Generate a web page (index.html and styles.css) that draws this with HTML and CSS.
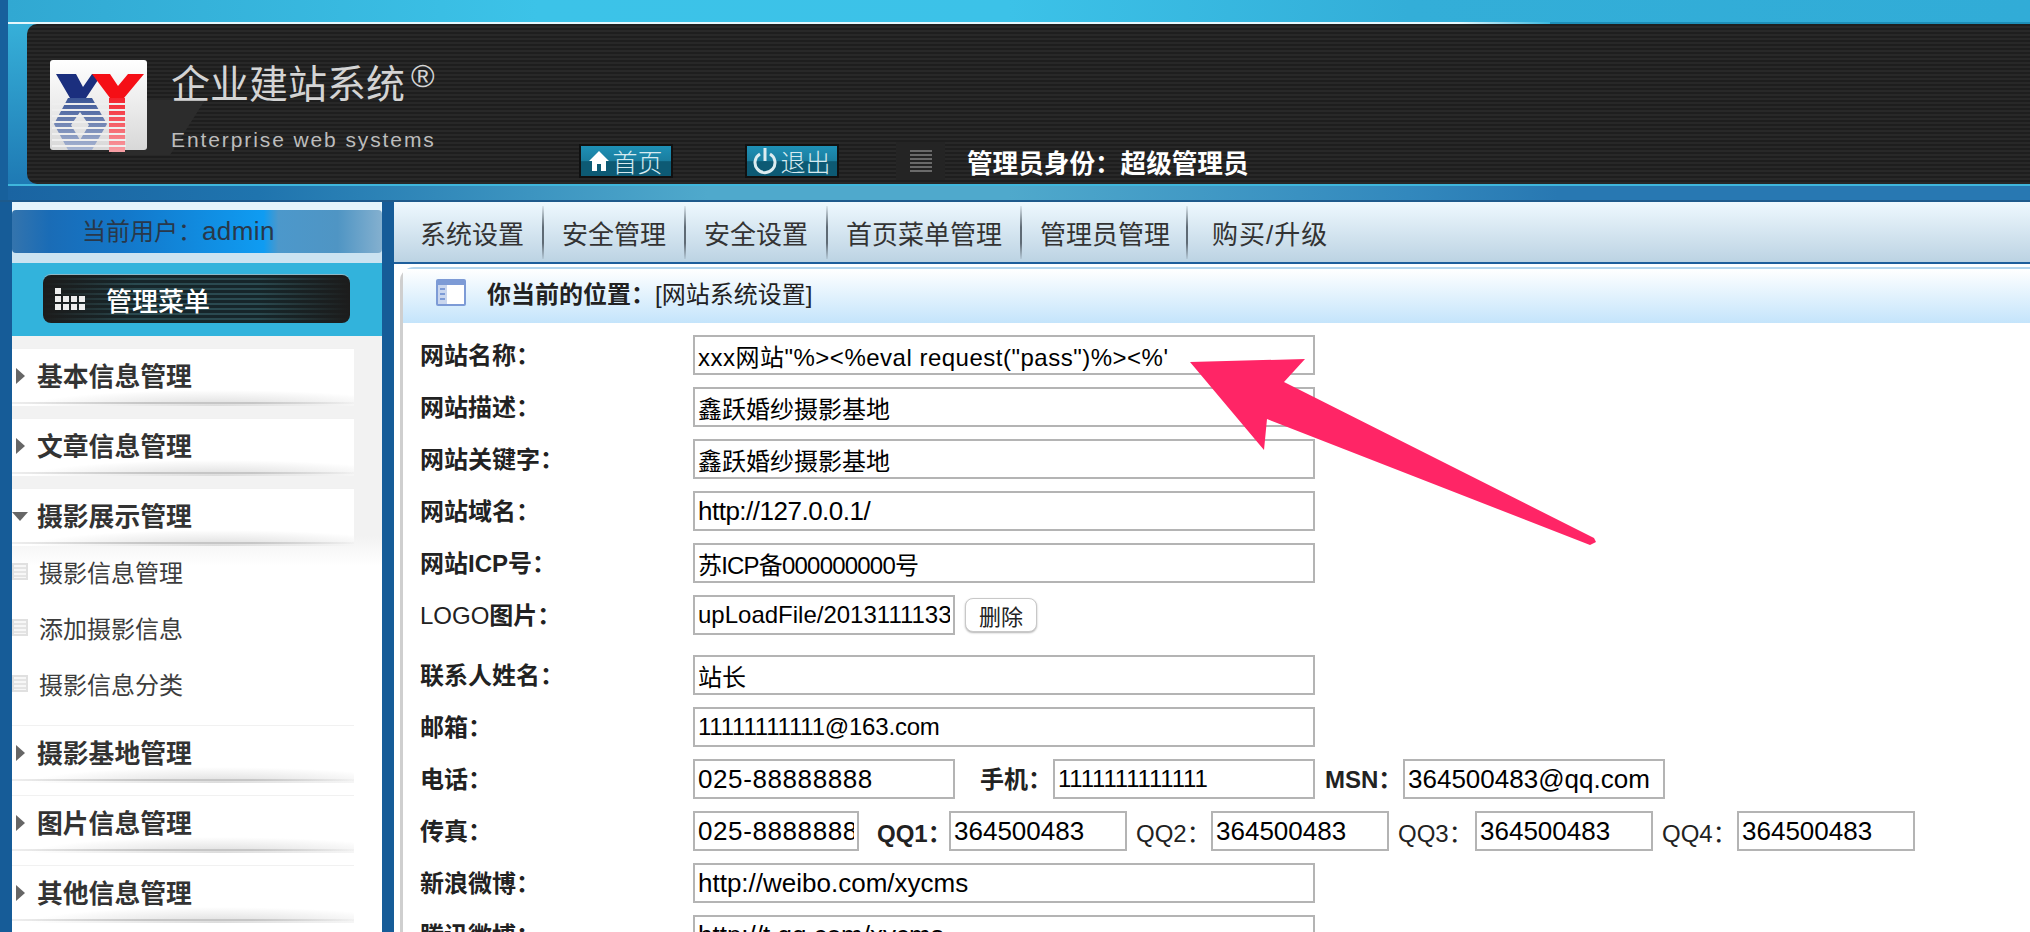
FILE: index.html
```html
<!DOCTYPE html>
<html lang="zh-CN">
<head>
    <meta charset="UTF-8" />
    <title>企业建站系统</title>
    <link rel="stylesheet" href="styles.css">
</head>
<body>
    <div class="top">
        <div class="top-band"></div>
        <div class="head">
            <svg class="logo" width="160" height="96" viewBox="0 0 160 96">
                <defs>
                    <linearGradient id="boxFill" x1="0" y1="0" x2="0" y2="1">
                        <stop offset="0" stop-color="#ffffff" />
                        <stop offset="1" stop-color="#d8d8d8" />
                    </linearGradient>
                    <linearGradient id="blueFade" gradientUnits="userSpaceOnUse" x1="0" y1="38" x2="0" y2="90">
                        <stop offset="0" stop-color="#3a5596" />
                        <stop offset="1" stop-color="#a9b6d2" />
                    </linearGradient>
                    <linearGradient id="redFade" gradientUnits="userSpaceOnUse" x1="0" y1="38" x2="0" y2="92">
                        <stop offset="0" stop-color="#f4222c" />
                        <stop offset="1" stop-color="#f7a0a6" />
                    </linearGradient>
                </defs>
                <polygon points="98,40 155,40 120,95 60,95" fill="#2c2c2c" />
                <rect x="0" y="0" width="97" height="90" rx="3" fill="url(#boxFill)" />
                <polygon points="6,14 26,14 33,27 42,14 52,14 36,38 20,38" fill="#1b2f7e" />
                <polygon points="42,14 60,14 68,26 78,14 94,14 74,38 60,38" fill="#f50f16" />
                <path fill-rule="evenodd" fill="url(#blueFade)" d="M18 38H42L57 64L42 90H18L4 64ZM30 52L21 65L30 80L39 65Z" />
                <rect x="59" y="38" width="16" height="54" fill="url(#redFade)" />
                <g fill="#eeeeee">
                    <rect x="2" y="43" width="74" height="2" />
                    <rect x="2" y="49" width="74" height="2" />
                    <rect x="2" y="55" width="74" height="2" />
                    <rect x="2" y="61" width="74" height="2" />
                    <rect x="2" y="67" width="74" height="2" />
                    <rect x="2" y="73" width="74" height="2" />
                    <rect x="2" y="79" width="74" height="2" />
                    <rect x="2" y="85" width="74" height="2" />
                </g>
            </svg>
            <div class="brand">
                <div class="brand-name">企业建站系统<span class="brand-mark">®</span></div>
                <div class="brand-sub">Enterprise web systems</div>
            </div>
            <div class="tools">
                <a class="tool-btn tool-home">
                    <svg width="20" height="22" viewBox="0 0 20 22"><path d="M10 1L20 11H17V21H12V14H8V21H3V11H0Z" fill="#fff" /></svg>
                    首页
                </a>
                <a class="tool-btn tool-exit">
                    <svg width="24" height="28" viewBox="0 0 24 28"><path d="M7 7A10 10 0 1 0 17 7" fill="none" stroke="#dcecf0" stroke-width="3" /><path d="M12 1V14" stroke="#dcecf0" stroke-width="3" /></svg>
                    退出
                </a>
                <span class="tool-lines"><i></i><i></i><i></i><i></i><i></i><i></i></span>
                <span class="tool-role">管理员身份：超级管理员</span>
            </div>
        </div>
        <div class="bottom-band"></div>
    </div>

    <div class="main">
        <div class="side">
            <div class="side-user"><div class="side-user-bar">当前用户：<span class="side-admin">admin</span></div></div>
            <div class="side-title">
                <div class="side-btn">
                    <svg width="31" height="22" viewBox="0 0 31 22" fill="#eee">
                        <rect x="0" y="0" width="6" height="6" />
                        <rect x="0" y="8" width="6" height="6" />
                        <rect x="8" y="8" width="6" height="6" />
                        <rect x="16" y="8" width="6" height="6" />
                        <rect x="24" y="8" width="6" height="6" />
                        <rect x="0" y="16" width="6" height="6" />
                        <rect x="8" y="16" width="6" height="6" />
                        <rect x="16" y="16" width="6" height="6" />
                        <rect x="24" y="16" width="6" height="6" />
                    </svg>
                    <span>管理菜单</span>
                </div>
            </div>
            <div class="menu">
                <div class="menu-item"><span class="arrow"></span>基本信息管理</div>
                <div class="menu-item"><span class="arrow"></span>文章信息管理</div>
                <div class="menu-item"><span class="arrow arrow-open"></span>摄影展示管理</div>
                <div class="sub-list">
                    <div class="sub-item"><span class="doc"></span>摄影信息管理</div>
                    <div class="sub-item"><span class="doc"></span>添加摄影信息</div>
                    <div class="sub-item"><span class="doc"></span>摄影信息分类</div>
                </div>
                <div class="menu-item"><span class="arrow"></span>摄影基地管理</div>
                <div class="menu-item"><span class="arrow"></span>图片信息管理</div>
                <div class="menu-item"><span class="arrow"></span>其他信息管理</div>
            </div>
        </div>

        <div class="content">
            <div class="nav">
                <a>系统设置</a>
                <a>安全管理</a>
                <a>安全设置</a>
                <a>首页菜单管理</a>
                <a class="nav-tight">管理员管理</a>
                <a class="nav-last">购买/升级</a>
            </div>
            <div class="panel">
                <div class="panel-head">
                    <svg width="30" height="27" viewBox="0 0 30 27">
                        <rect x="0" y="0" width="30" height="27" rx="2" fill="#7d9bd6" />
                        <rect x="2" y="6" width="26" height="19" fill="#fff" />
                        <rect x="2" y="6" width="9" height="19" fill="#c9d6ee" />
                        <rect x="4" y="9" width="5" height="2" fill="#7d9bd6" />
                        <rect x="4" y="14" width="5" height="2" fill="#7d9bd6" />
                        <rect x="4" y="19" width="5" height="2" fill="#7d9bd6" />
                    </svg>
                    <span class="crumb"><b>你当前的位置：</b>[网站系统设置]</span>
                </div>
                <form class="form">
                    <div class="row"><label>网站名称：</label><input class="w-full v-script" type="text" readonly value="xxx网站&quot;%&gt;&lt;%eval request(&quot;pass&quot;)%&gt;&lt;%'" /></div>
                    <div class="row"><label>网站描述：</label><input class="w-full" type="text" readonly value="鑫跃婚纱摄影基地" /></div>
                    <div class="row"><label>网站关键字：</label><input class="w-full" type="text" readonly value="鑫跃婚纱摄影基地" /></div>
                    <div class="row"><label>网站域名：</label><input class="w-full v-latin v-ip" type="text" readonly value="http://127.0.0.1/" /></div>
                    <div class="row"><label>网站ICP号：</label><input class="w-full v-icp" type="text" readonly value="苏ICP备000000000号" /></div>
                    <div class="row row-logo"><label><span class="thin">LOGO</span>图片：</label><input class="w-half" type="text" readonly value="upLoadFile/20131111332.jpg" /><button type="button" class="del">删除</button></div>
                    <div class="row"><label>联系人姓名：</label><input class="w-full" type="text" readonly value="站长" /></div>
                    <div class="row"><label>邮箱：</label><input class="w-full v-tight" type="text" readonly value="11111111111@163.com" /></div>
                    <div class="row">
                        <label>电话：</label><input class="w-half v-latin v-tel" type="text" readonly value="025-88888888" />
                        <label class="lb-mobile">手机：</label><input class="w-half v-tight" type="text" readonly value="1111111111111" />
                        <label class="lb-msn">MSN：</label><input class="w-half v-latin" type="text" readonly value="364500483@qq.com" />
                    </div>
                    <div class="row">
                        <label>传真：</label><input class="w-fax v-latin v-tel" type="text" readonly value="025-88888888" />
                        <label class="lb-qq1">QQ1：</label><input class="w-qq v-latin" type="text" readonly value="364500483" />
                        <label class="lb-qq">QQ2：</label><input class="w-qq v-latin" type="text" readonly value="364500483" />
                        <label class="lb-qq lb-qq3">QQ3：</label><input class="w-qq v-latin" type="text" readonly value="364500483" />
                        <label class="lb-qq">QQ4：</label><input class="w-qq v-latin" type="text" readonly value="364500483" />
                    </div>
                    <div class="row"><label>新浪微博：</label><input class="w-full v-latin" type="text" readonly value="http://weibo.com/xycms" /></div>
                    <div class="row"><label>腾讯微博：</label><input class="w-full v-latin" type="text" readonly value="http://t.qq.com/xycms" /></div>
                </form>
            </div>
        </div>
    </div>

    <svg class="pointer" width="2030" height="932" viewBox="0 0 2030 932">
        <polygon points="1190,362 1305,359 1284,382 1594,538 1596,542 1590,545 1267,419 1264,450" fill="#ff2566" />
    </svg>
</body>
</html>
```

FILE: styles.css
```css
html, body {
    margin: 0;
    height: 932px;
    overflow: hidden;
}
body {
    position: relative;
    font-family: "Liberation Sans", "Noto Sans CJK SC", sans-serif;
    background: #fff;
    color: #333;
}

/* header */
.top {
    height: 200px;
    border-left: 8px solid #17609c;
    background: linear-gradient(#3ab8de, #1c74b0);
    box-sizing: border-box;
}
.top-band {
    height: 24px;
    background:
        linear-gradient(90deg, #e6f7fc 0, #e6f7fc 1450px, #39b7de 1542px, #1d8fb8 1542px) left bottom / 100% 2px no-repeat,
        linear-gradient(90deg, #31a8d2 0, #3cc3e8 530px, #3cc2e8 1000px, #33aed8 1400px, #31acd7 100%);
}
.head {
    display: flex;
    height: 160px;
    margin-left: 19px;
    box-sizing: border-box;
    padding: 36px 0 0 23px;
    border-radius: 10px 0 0 10px;
    background: repeating-linear-gradient(#1e1e1e 0, #1e1e1e 2px, #282828 2px, #282828 4px);
}
.logo {
    flex: none;
    margin-right: -39px;
}
.brand {
    width: 408px;
    flex: none;
}
.brand-name {
    position: relative;
    font-size: 39px;
    line-height: 50px;
    color: #d4d4d4;
    font-weight: 400;
}
.brand-mark {
    position: absolute;
    left: 240px;
    top: -4px;
    font-size: 32px;
    line-height: 40px;
}
.brand-sub {
    margin-top: 18px;
    font-size: 21px;
    line-height: 24px;
    letter-spacing: 1.9px;
    color: #bcbcbc;
}
.tools {
    display: flex;
    align-items: center;
    height: 38px;
    margin-top: 82px;
}
.tool-btn {
    display: flex;
    align-items: center;
    justify-content: center;
    gap: 3px;
    width: 94px;
    height: 34px;
    box-sizing: border-box;
    border: 2px solid #111;
    font-size: 25px;
    font-weight: 300;
    color: #d6ebf1;
    background: linear-gradient(#1e90b6 0, #1a7d9e 50%, #0d5a74 52%, #0d5a74 100%);
}
.tool-exit {
    margin-left: 72px;
}
.tool-lines {
    display: flex;
    flex-direction: column;
    justify-content: center;
    gap: 2px;
    width: 49px;
    height: 38px;
    margin-left: 57px;
    align-items: center;
    background: #242424;
}
.tool-lines i {
    width: 22px;
    height: 2px;
    background: #6a6a6a;
}
.tool-role {
    margin-left: 22px;
    font-size: 25.6px;
    font-weight: 700;
    color: #fff;
    white-space: nowrap;
}
.bottom-band {
    height: 14px;
    border-top: 2px solid #3fb6dc;
    background: linear-gradient(90deg, #1a64a2 0, #1f74ae 250px, #4fa9cc 700px, #4fa9cc 1000px, #3288bd 1400px, #2878b2 1550px, #2878b2 100%);
}

/* left column */
.main {
    display: flex;
    height: 732px;
    border-top: 2px solid #1d5a8c;
    box-sizing: border-box;
}
.side {
    flex: none;
    width: 394px;
    box-sizing: border-box;
    border-left: 12px solid #165c98;
    border-right: 12px solid #165c98;
    background: #fff;
}
.side-user {
    height: 61px;
    box-sizing: border-box;
    padding: 8px 0 10px;
    background: linear-gradient(#e6f5fc 0, #e6f5fc 50%, #cbe3f1 50%);
}
.side-user-bar {
    height: 43px;
    line-height: 43px;
    padding-left: 70px;
    font-size: 24px;
    color: #29384a;
    border-radius: 4px;
    background: linear-gradient(90deg, #3474ad 0, #1a6cb6 10%, #1377c9 30%, #0f9cf2 68%, #4c98cb 72%, #4f95c4 88%, #84b0cf 100%);
}
.side-admin {
    font-size: 26px;
    letter-spacing: 0.4px;
}
.side-title {
    height: 73px;
    box-sizing: border-box;
    padding-top: 12px;
    background: #32b3dc;
}
.side-btn {
    display: flex;
    align-items: center;
    width: 307px;
    height: 48px;
    margin-left: 31px;
    box-sizing: border-box;
    padding-left: 12px;
    border-radius: 8px;
    color: #fff;
    font-size: 26px;
    font-weight: 500;
    background: linear-gradient(90deg, #1c1c1c 0, rgba(28,28,28,0) 30%, rgba(28,28,28,0) 70%, #1c1c1c 100%),
        repeating-linear-gradient(#16262a 0, #16262a 3px, #2a4a50 3px, #2a4a50 5px);
    box-shadow: 0 -1px 0 #8fb8c6;
}
.side-btn span {
    margin-left: 20px;
}
.menu {
    height: 100%;
    padding-top: 12px;
    background: linear-gradient(#f2f2f2 0, #f2f2f2 200px, #ffffff 230px);
}
.menu-item {
    position: relative;
    width: 342px;
    height: 58px;
    box-sizing: border-box;
    margin-bottom: 12px;
    padding-left: 25px;
    line-height: 56px;
    font-size: 25.8px;
    font-weight: 700;
    color: #333;
    border-top: 1px solid #f1f1f1;
    background: radial-gradient(ellipse 55% 16px at 60% 100%, #dcdcdc, rgba(255,255,255,0) 100%), #fff;
}
.menu-item::after {
    content: "";
    position: absolute;
    left: 0;
    right: 0;
    bottom: 2px;
    height: 2px;
    background: linear-gradient(90deg, rgba(200,200,200,0.3), #c6c6c6 40%, #c6c6c6 70%, rgba(200,200,200,0.1));
}
.arrow {
    position: absolute;
    left: 4px;
    top: 19px;
    border-left: 9px solid #666;
    border-top: 8px solid transparent;
    border-bottom: 8px solid transparent;
}
.arrow-open {
    left: 0;
    top: 23px;
    border-top: 9px solid #666;
    border-left: 8px solid transparent;
    border-right: 8px solid transparent;
    border-bottom: 0;
}
.sub-list {
    margin: -13px 0 12px;
}
.sub-item {
    display: flex;
    align-items: center;
    height: 56px;
    box-sizing: border-box;
    padding-bottom: 3px;
    font-size: 24px;
    color: #3d3d3d;
}
.doc {
    width: 16px;
    height: 17px;
    box-sizing: border-box;
    margin-right: 11px;
    border: 2px solid #e0e0e0;
    background: repeating-linear-gradient(#f7f7f7 0, #f7f7f7 2px, #e4e4e4 2px, #e4e4e4 4px);
}

/* right column */
.content {
    flex: 1;
    min-width: 0;
}
.nav {
    display: flex;
    align-items: center;
    height: 60px;
    border-bottom: 2px solid #1f5f9c;
    background: linear-gradient(#eef8fe, #bcd3e3);
    padding-left: 7px;
}
.nav a {
    position: relative;
    padding: 0 19px;
    font-size: 26px;
    color: #333;
    white-space: nowrap;
}
.nav a::after {
    content: "";
    position: absolute;
    right: -1px;
    top: -8px;
    bottom: -8px;
    width: 2px;
    background: linear-gradient(rgba(90,100,110,0.1), #5e6a74 40%, #5e6a74 70%, rgba(90,100,110,0.1));
}
.nav a.nav-tight {
    padding-right: 17px;
}
.nav a.nav-last {
    padding-left: 25px;
    letter-spacing: 1px;
}
.nav a.nav-last::after {
    display: none;
}
.panel {
    margin: 3px 0 0 6px;
    border-left: 3px solid #cfcfcf;
    border-top: 2px solid #b4d6ee;
    border-top-left-radius: 14px;
}
.panel-head {
    display: flex;
    align-items: center;
    height: 54px;
    box-sizing: border-box;
    padding: 0 0 7px 33px;
    background: linear-gradient(#ffffff, #c4e4fb);
}
.crumb {
    margin-left: 21px;
    font-size: 24px;
    color: #222;
}
.form {
    padding: 12px 0 0 17px;
}
.row {
    display: flex;
    align-items: center;
    height: 40px;
    margin-bottom: 12px;
    font-size: 24px;
    color: #222;
}
.row-logo {
    margin-bottom: 20px;
}
.row label {
    flex: none;
    width: 273px;
    margin-top: -4px;
    font-weight: 700;
    white-space: nowrap;
}
.thin {
    font-weight: 400;
}
.row input {
    flex: none;
    height: 40px;
    box-sizing: border-box;
    padding: 0 3px;
    border: 2px solid #b4b4b4;
    font-family: inherit;
    font-size: 24px;
    color: #000;
    background: #fff;
    outline: none;
}
.row input.v-latin { font-size: 26px; }
.row input.v-ip { letter-spacing: -0.5px; }
.row input.v-tel { letter-spacing: 0.6px; }
.row input.v-tight { letter-spacing: -0.2px; }
.row input.v-icp { letter-spacing: -0.8px; }
.row input.v-script { letter-spacing: 0.5px; }
.w-full { width: 622px; }
.w-half { width: 262px; }
.w-fax { width: 166px; }
.w-qq { width: 178px; }
.row label.lb-mobile { width: 73px; margin-left: 25px; }
.row label.lb-msn { width: 78px; margin-left: 10px; }
.row label.lb-qq1 { width: 72px; margin-left: 18px; margin-top: 0; }
.row label.lb-qq { width: 75px; margin-left: 9px; margin-top: 0; font-weight: 400; }
.row label.lb-qq3 { width: 77px; }
.del {
    width: 72px;
    height: 34px;
    margin-left: 10px;
    padding: 0;
    border: 1px solid #c8c8c8;
    border-radius: 8px;
    font-family: inherit;
    font-size: 22px;
    color: #222;
    background: #fff;
    box-shadow: 0 1px 2px rgba(0,0,0,0.3);
}

/* annotation over the page */
.pointer {
    position: absolute;
    left: 0;
    top: 0;
    pointer-events: none;
}
```
